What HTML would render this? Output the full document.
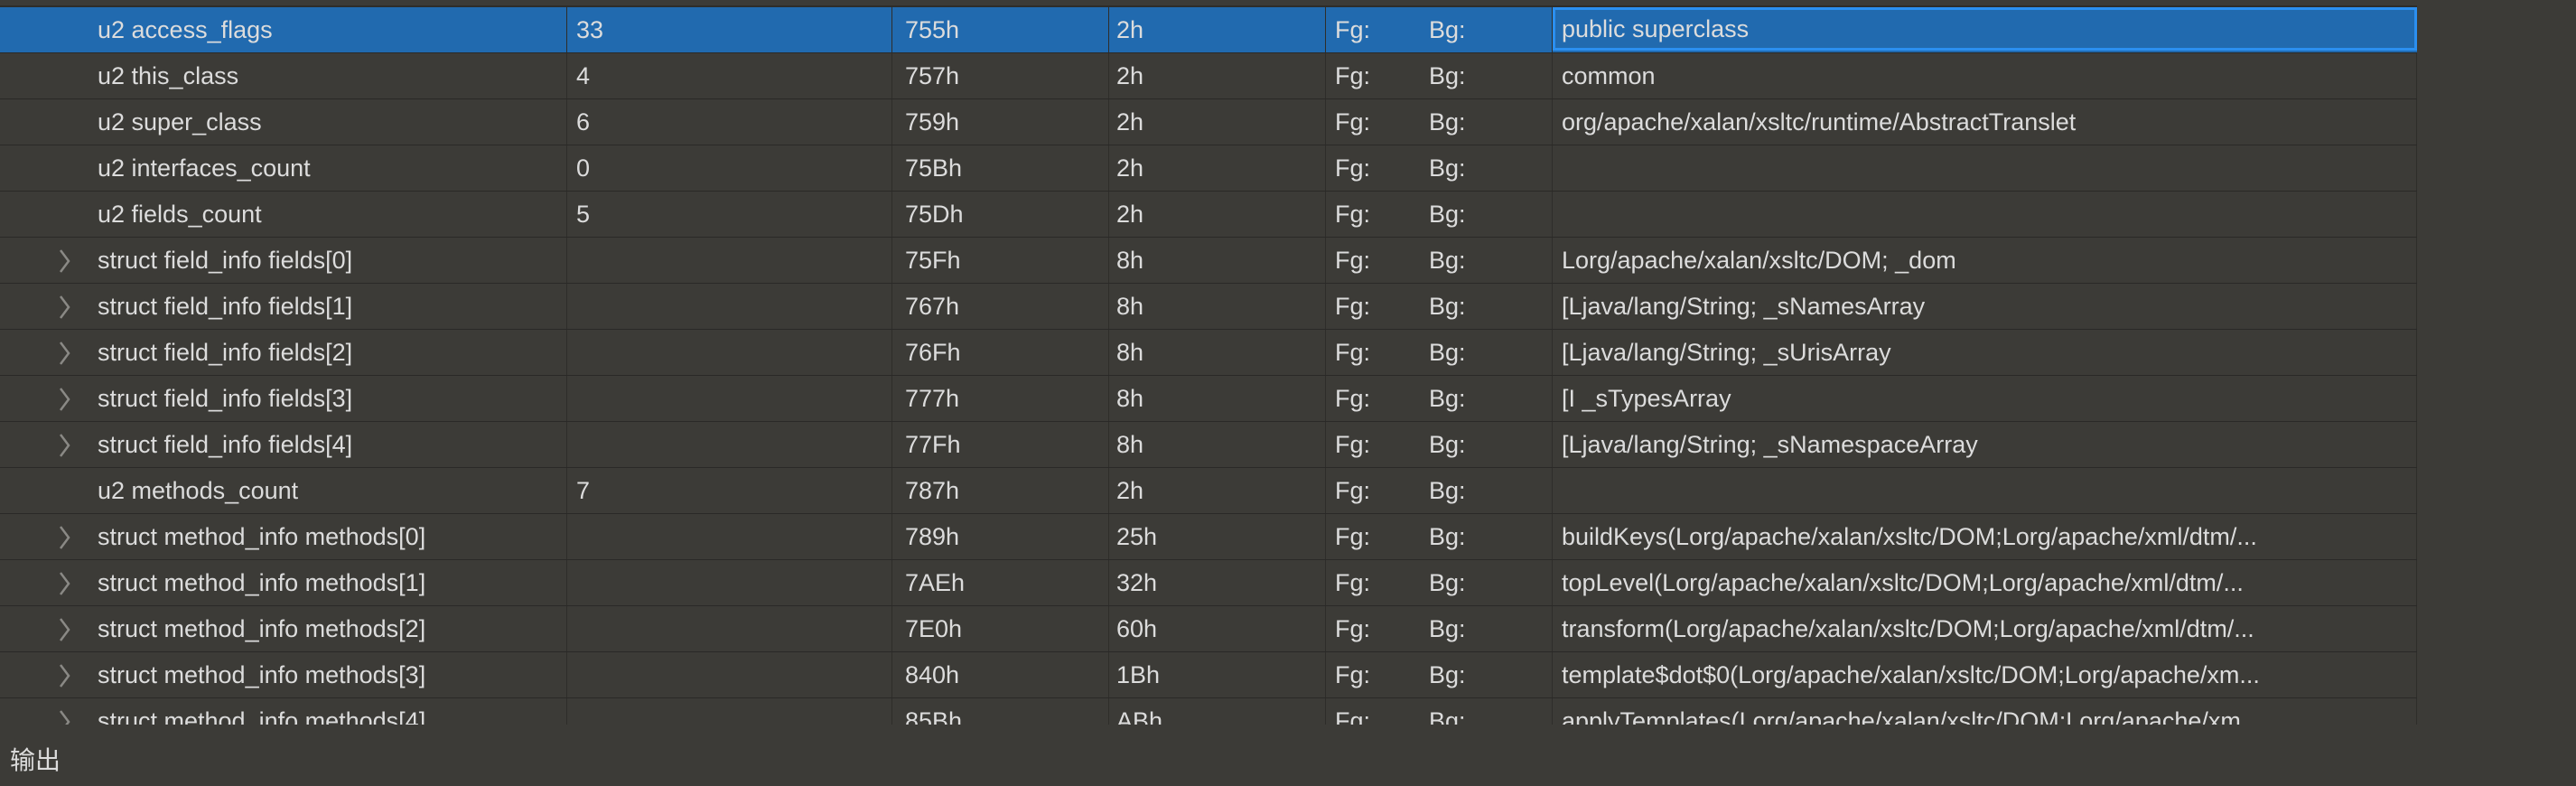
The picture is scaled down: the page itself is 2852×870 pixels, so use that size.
<!DOCTYPE html>
<html><head><meta charset="utf-8"><style>
body{margin:0;width:2852px;height:870px;background:#3c3b37;overflow:hidden;font-family:"Liberation Sans","Noto Sans CJK SC",sans-serif;color:#dcdcdc;font-size:27px;position:relative}
#tbl{position:absolute;left:0;top:0;width:2676px;height:802px;overflow:hidden}
.hdr{position:absolute;left:0;top:0;width:2676px;height:6px;border-bottom:2px solid #2e2d2a}
.row{position:absolute;left:0;width:2676px;height:50px;border-bottom:1px solid #2a2927}
.row.sel{background:#216aaf}
.c{position:absolute;top:0;height:50px;line-height:50px;white-space:nowrap;overflow:hidden;border-right:1px solid #2e2d2a;box-sizing:border-box}
.c0{left:0;width:628px;padding-left:108px}
.c1{left:628px;width:360px;padding-left:10px}
.c2{left:988px;width:240px;padding-left:14px}
.c3{left:1228px;width:240px;padding-left:8px}
.c4{left:1468px;width:251px;padding-left:10px}
.c4 span{position:absolute;left:114px}
.c5{left:1719px;width:957px;padding-left:10px;border-right:1px solid #2e2d2a}
.sel .c5{border:3px solid #2b8ff0;height:48px;line-height:42px;top:0;padding-left:7px}
.arr{position:absolute;left:64px;top:12px;width:16px;height:28px}
.out{position:absolute;left:11px;top:820px;font-size:28px}
</style></head><body>
<div id="tbl">
<div class="hdr"></div>
<div class="row sel" style="top:8px"><div class="c c0">u2 access_flags</div><div class="c c1">33</div><div class="c c2">755h</div><div class="c c3">2h</div><div class="c c4">Fg:<span>Bg:</span></div><div class="c c5">public superclass</div></div>
<div class="row" style="top:59px"><div class="c c0">u2 this_class</div><div class="c c1">4</div><div class="c c2">757h</div><div class="c c3">2h</div><div class="c c4">Fg:<span>Bg:</span></div><div class="c c5">common</div></div>
<div class="row" style="top:110px"><div class="c c0">u2 super_class</div><div class="c c1">6</div><div class="c c2">759h</div><div class="c c3">2h</div><div class="c c4">Fg:<span>Bg:</span></div><div class="c c5">org/apache/xalan/xsltc/runtime/AbstractTranslet</div></div>
<div class="row" style="top:161px"><div class="c c0">u2 interfaces_count</div><div class="c c1">0</div><div class="c c2">75Bh</div><div class="c c3">2h</div><div class="c c4">Fg:<span>Bg:</span></div><div class="c c5"></div></div>
<div class="row" style="top:212px"><div class="c c0">u2 fields_count</div><div class="c c1">5</div><div class="c c2">75Dh</div><div class="c c3">2h</div><div class="c c4">Fg:<span>Bg:</span></div><div class="c c5"></div></div>
<div class="row" style="top:263px"><div class="c c0">struct field_info fields[0]</div><svg class="arr" viewBox="0 0 16 28"><polyline points="3,2 12,14 3,26" fill="none" stroke="#8a8985" stroke-width="2.5"/></svg><div class="c c1"></div><div class="c c2">75Fh</div><div class="c c3">8h</div><div class="c c4">Fg:<span>Bg:</span></div><div class="c c5">Lorg/apache/xalan/xsltc/DOM; _dom</div></div>
<div class="row" style="top:314px"><div class="c c0">struct field_info fields[1]</div><svg class="arr" viewBox="0 0 16 28"><polyline points="3,2 12,14 3,26" fill="none" stroke="#8a8985" stroke-width="2.5"/></svg><div class="c c1"></div><div class="c c2">767h</div><div class="c c3">8h</div><div class="c c4">Fg:<span>Bg:</span></div><div class="c c5">[Ljava/lang/String; _sNamesArray</div></div>
<div class="row" style="top:365px"><div class="c c0">struct field_info fields[2]</div><svg class="arr" viewBox="0 0 16 28"><polyline points="3,2 12,14 3,26" fill="none" stroke="#8a8985" stroke-width="2.5"/></svg><div class="c c1"></div><div class="c c2">76Fh</div><div class="c c3">8h</div><div class="c c4">Fg:<span>Bg:</span></div><div class="c c5">[Ljava/lang/String; _sUrisArray</div></div>
<div class="row" style="top:416px"><div class="c c0">struct field_info fields[3]</div><svg class="arr" viewBox="0 0 16 28"><polyline points="3,2 12,14 3,26" fill="none" stroke="#8a8985" stroke-width="2.5"/></svg><div class="c c1"></div><div class="c c2">777h</div><div class="c c3">8h</div><div class="c c4">Fg:<span>Bg:</span></div><div class="c c5">[I _sTypesArray</div></div>
<div class="row" style="top:467px"><div class="c c0">struct field_info fields[4]</div><svg class="arr" viewBox="0 0 16 28"><polyline points="3,2 12,14 3,26" fill="none" stroke="#8a8985" stroke-width="2.5"/></svg><div class="c c1"></div><div class="c c2">77Fh</div><div class="c c3">8h</div><div class="c c4">Fg:<span>Bg:</span></div><div class="c c5">[Ljava/lang/String; _sNamespaceArray</div></div>
<div class="row" style="top:518px"><div class="c c0">u2 methods_count</div><div class="c c1">7</div><div class="c c2">787h</div><div class="c c3">2h</div><div class="c c4">Fg:<span>Bg:</span></div><div class="c c5"></div></div>
<div class="row" style="top:569px"><div class="c c0">struct method_info methods[0]</div><svg class="arr" viewBox="0 0 16 28"><polyline points="3,2 12,14 3,26" fill="none" stroke="#8a8985" stroke-width="2.5"/></svg><div class="c c1"></div><div class="c c2">789h</div><div class="c c3">25h</div><div class="c c4">Fg:<span>Bg:</span></div><div class="c c5">buildKeys(Lorg/apache/xalan/xsltc/DOM;Lorg/apache/xml/dtm/...</div></div>
<div class="row" style="top:620px"><div class="c c0">struct method_info methods[1]</div><svg class="arr" viewBox="0 0 16 28"><polyline points="3,2 12,14 3,26" fill="none" stroke="#8a8985" stroke-width="2.5"/></svg><div class="c c1"></div><div class="c c2">7AEh</div><div class="c c3">32h</div><div class="c c4">Fg:<span>Bg:</span></div><div class="c c5">topLevel(Lorg/apache/xalan/xsltc/DOM;Lorg/apache/xml/dtm/...</div></div>
<div class="row" style="top:671px"><div class="c c0">struct method_info methods[2]</div><svg class="arr" viewBox="0 0 16 28"><polyline points="3,2 12,14 3,26" fill="none" stroke="#8a8985" stroke-width="2.5"/></svg><div class="c c1"></div><div class="c c2">7E0h</div><div class="c c3">60h</div><div class="c c4">Fg:<span>Bg:</span></div><div class="c c5">transform(Lorg/apache/xalan/xsltc/DOM;Lorg/apache/xml/dtm/...</div></div>
<div class="row" style="top:722px"><div class="c c0">struct method_info methods[3]</div><svg class="arr" viewBox="0 0 16 28"><polyline points="3,2 12,14 3,26" fill="none" stroke="#8a8985" stroke-width="2.5"/></svg><div class="c c1"></div><div class="c c2">840h</div><div class="c c3">1Bh</div><div class="c c4">Fg:<span>Bg:</span></div><div class="c c5">template$dot$0(Lorg/apache/xalan/xsltc/DOM;Lorg/apache/xm...</div></div>
<div class="row" style="top:773px"><div class="c c0">struct method_info methods[4]</div><svg class="arr" viewBox="0 0 16 28"><polyline points="3,2 12,14 3,26" fill="none" stroke="#8a8985" stroke-width="2.5"/></svg><div class="c c1"></div><div class="c c2">85Bh</div><div class="c c3">ABh</div><div class="c c4">Fg:<span>Bg:</span></div><div class="c c5">applyTemplates(Lorg/apache/xalan/xsltc/DOM;Lorg/apache/xm...</div></div>
</div>
<div class="out">输出</div>
</body></html>
